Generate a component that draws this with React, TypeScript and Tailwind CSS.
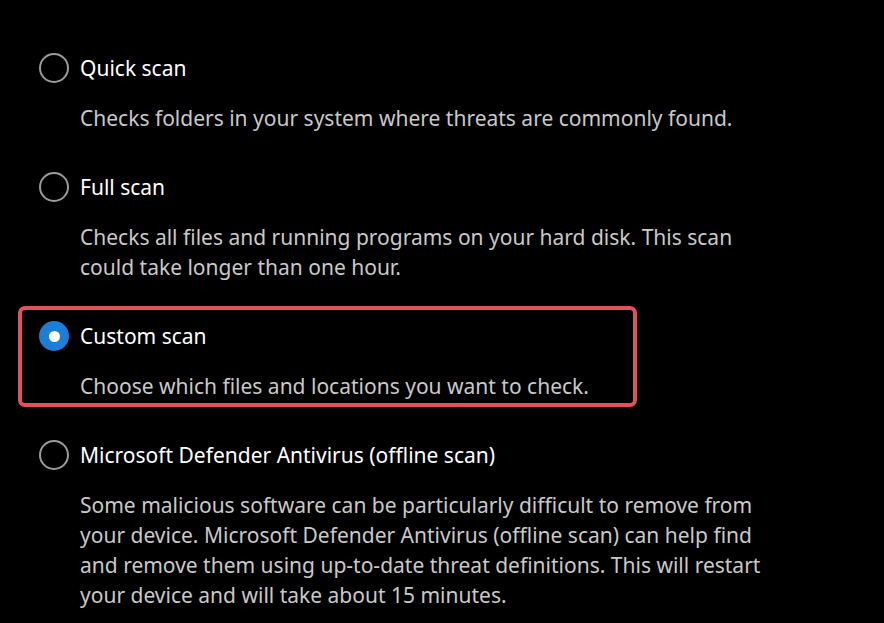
const options = [
  {
    label: "Quick scan",
    lines: ["Checks folders in your system where threats are commonly found."],
  },
  {
    label: "Full scan",
    lines: [
      "Checks all files and running programs on your hard disk. This scan",
      "could take longer than one hour.",
    ],
  },
  {
    label: "Custom scan",
    lines: ["Choose which files and locations you want to check."],
    selected: true,
  },
  {
    label: "Microsoft Defender Antivirus (offline scan)",
    lines: [
      "Some malicious software can be particularly difficult to remove from",
      "your device. Microsoft Defender Antivirus (offline scan) can help find",
      "and remove them using up-to-date threat definitions. This will restart",
      "your device and will take about 15 minutes.",
    ],
  },
];

function Radio({ selected }: { selected?: boolean }) {
  if (selected) {
    return (
      <span className="flex h-[30px] w-[30px] shrink-0 items-center justify-center rounded-full bg-[#1b7fd6]">
        <span className="h-[11px] w-[11px] rounded-full bg-white" />
      </span>
    );
  }
  return <span className="h-[30px] w-[30px] shrink-0 rounded-full border-2 border-[#9c9c9c]" />;
}

export default function App() {
  return (
    <div
      className="min-h-[623px] w-[884px] overflow-hidden bg-black pt-[38px] pl-[18px]"
      style={{ fontFamily: '"Noto Sans", "Open Sans", sans-serif' }}
    >
      <div className="flex flex-col gap-[18px]">
        {options.map((o) => (
          <div
            key={o.label}
            className={`w-[619px] rounded-[7px] border-4 pt-[11px] pb-[2px] pl-[17px] ${
              o.selected ? "border-[#e0535b]" : "border-transparent"
            }`}
          >
            <div className="flex h-[30px] items-center gap-[11px]">
              <Radio selected={o.selected} />
              <span className="whitespace-nowrap text-[21px] leading-[30px] text-white">{o.label}</span>
            </div>
            <div className="mt-[20px] pl-[41px] text-[21px] leading-[30px] text-[#c9c9c9]">
              {o.lines.map((l) => (
                <div key={l} className="whitespace-nowrap">
                  {l}
                </div>
              ))}
            </div>
          </div>
        ))}
      </div>
    </div>
  );
}
